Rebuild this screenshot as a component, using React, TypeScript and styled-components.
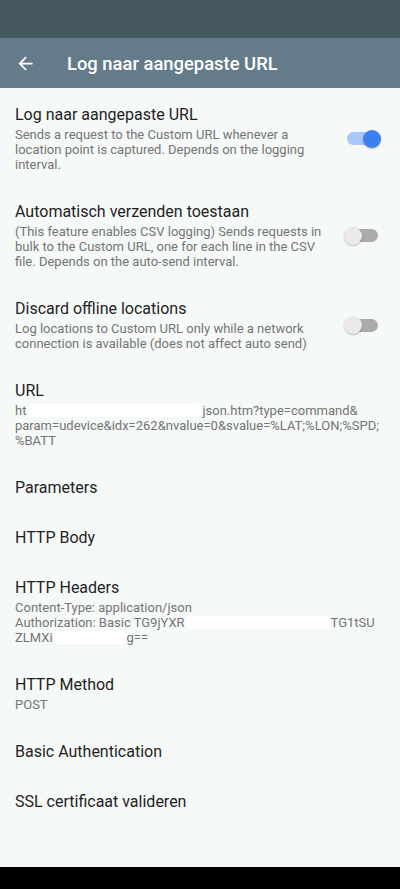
import React from 'react'
import styled, { createGlobalStyle } from 'styled-components'

const GlobalStyle = createGlobalStyle`
  html, body {
    margin: 0;
    padding: 0;
    background: #000;
  }
  body {
    font-family: Roboto, "Noto Sans", "Liberation Sans", sans-serif;
    -webkit-font-smoothing: antialiased;
  }
`

const Screen = styled.div`
  display: flex;
  flex-direction: column;
  width: 400px;
  height: 889px;
  overflow: hidden;
  background: #f5f9f7;
`

const StatusBar = styled.div`
  height: 38px;
  flex-shrink: 0;
  background: #45575f;
`

const Toolbar = styled.div`
  height: 50px;
  flex-shrink: 0;
  display: flex;
  align-items: center;
  background: #647c89;
  color: #fff;
`

const BackButton = styled.button`
  display: flex;
  align-items: center;
  justify-content: center;
  width: 21px;
  height: 21px;
  margin-left: 15px;
  padding: 0;
  border: 0;
  background: none;
  color: #fff;
`

const ToolbarTitle = styled.h1`
  margin: 0 0 0 31px;
  font-size: 18.4px;
  font-weight: 500;
  letter-spacing: 0;
`

const List = styled.div`
  flex: 1;
  padding-top: 2px;
`

const Row = styled.div`
  display: flex;
  align-items: center;
  padding: 15px;
`

const Texts = styled.div<{ $narrow?: boolean }>`
  flex: 1;
  min-width: 0;
  max-width: ${p => (p.$narrow ? '311px' : 'none')};
`

const Title = styled.div`
  font-size: 16px;
  line-height: 20px;
  color: #1f1f1f;
`

const Summary = styled.div`
  margin-top: 2px;
  font-size: 13px;
  line-height: 15px;
  color: #757575;
  white-space: pre-line;
`

const Redact = styled.span<{ $w: number }>`
  display: inline-block;
  width: ${p => p.$w}px;
  height: 13px;
  vertical-align: -2px;
  background: #fff;
  border-radius: 6px;
`

const SwitchBox = styled.div`
  position: relative;
  width: 37px;
  height: 20px;
  margin-left: auto;
  margin-right: 4px;
  flex-shrink: 0;
`

const Track = styled.div<{ $on: boolean }>`
  position: absolute;
  left: 3px;
  top: 3.5px;
  width: 31px;
  height: 13px;
  border-radius: 7px;
  background: ${p => (p.$on ? '#a9c8fa' : '#ababab')};
`

const Thumb = styled.div<{ $on: boolean }>`
  position: absolute;
  top: 1px;
  left: ${p => (p.$on ? '19px' : '0')};
  width: 18px;
  height: 18px;
  border-radius: 50%;
  background: ${p => (p.$on ? '#3c80ef' : '#ece9ec')};
  box-shadow: 0 1px 2px rgba(0, 0, 0, 0.25);
`

const NavBar = styled.div`
  height: 22px;
  flex-shrink: 0;
  background: #000;
`

const Switch = ({ on }: { on: boolean }) => (
  <SwitchBox>
    <Track $on={on} />
    <Thumb $on={on} />
  </SwitchBox>
)

type PrefProps = {
  title: string
  summary?: React.ReactNode
  toggle?: boolean
}

const Pref = ({ title, summary, toggle }: PrefProps) => (
  <Row>
    <Texts $narrow={toggle !== undefined}>
      <Title>{title}</Title>
      {summary && <Summary>{summary}</Summary>}
    </Texts>
    {toggle !== undefined && <Switch on={toggle} />}
  </Row>
)

export default function App() {
  return (
    <>
      <GlobalStyle />
      <Screen>
        <StatusBar />
        <Toolbar>
          <BackButton aria-label="back">
            <svg width="21" height="21" viewBox="0 0 24 24" fill="currentColor">
              <path d="M20 11H7.83l5.59-5.59L12 4l-8 8 8 8 1.41-1.41L7.83 13H20v-2z" />
            </svg>
          </BackButton>
          <ToolbarTitle>Log naar aangepaste URL</ToolbarTitle>
        </Toolbar>
        <List>
          <Pref
            title="Log naar aangepaste URL"
            summary="Sends a request to the Custom URL whenever a location point is captured. Depends on the logging interval."
            toggle={true}
          />
          <Pref
            title="Automatisch verzenden toestaan"
            summary="(This feature enables CSV logging) Sends requests in bulk to the Custom URL, one for each line in the CSV file. Depends on the auto-send interval."
            toggle={false}
          />
          <Pref
            title="Discard offline locations"
            summary="Log locations to Custom URL only while a network connection is available (does not affect auto send)"
            toggle={false}
          />
          <Pref
            title="URL"
            summary={
              <>
                ht<Redact $w={176} />json.htm?type=command&amp;{'\n'}
                param=udevice&amp;idx=262&amp;nvalue=0&amp;svalue=%LAT;%LON;%SPD;{'\n'}
                %BATT
              </>
            }
          />
          <Pref title="Parameters" />
          <Pref title="HTTP Body" />
          <Pref
            title="HTTP Headers"
            summary={
              <>
                Content-Type: application/json{'\n'}
                Authorization: Basic TG9jYXR<Redact $w={146} />TG1tSU{'\n'}
                ZLMXi<Redact $w={74} />g==
              </>
            }
          />
          <Pref title="HTTP Method" summary="POST" />
          <Pref title="Basic Authentication" />
          <Pref title="SSL certificaat valideren" />
        </List>
        <NavBar />
      </Screen>
    </>
  )
}
